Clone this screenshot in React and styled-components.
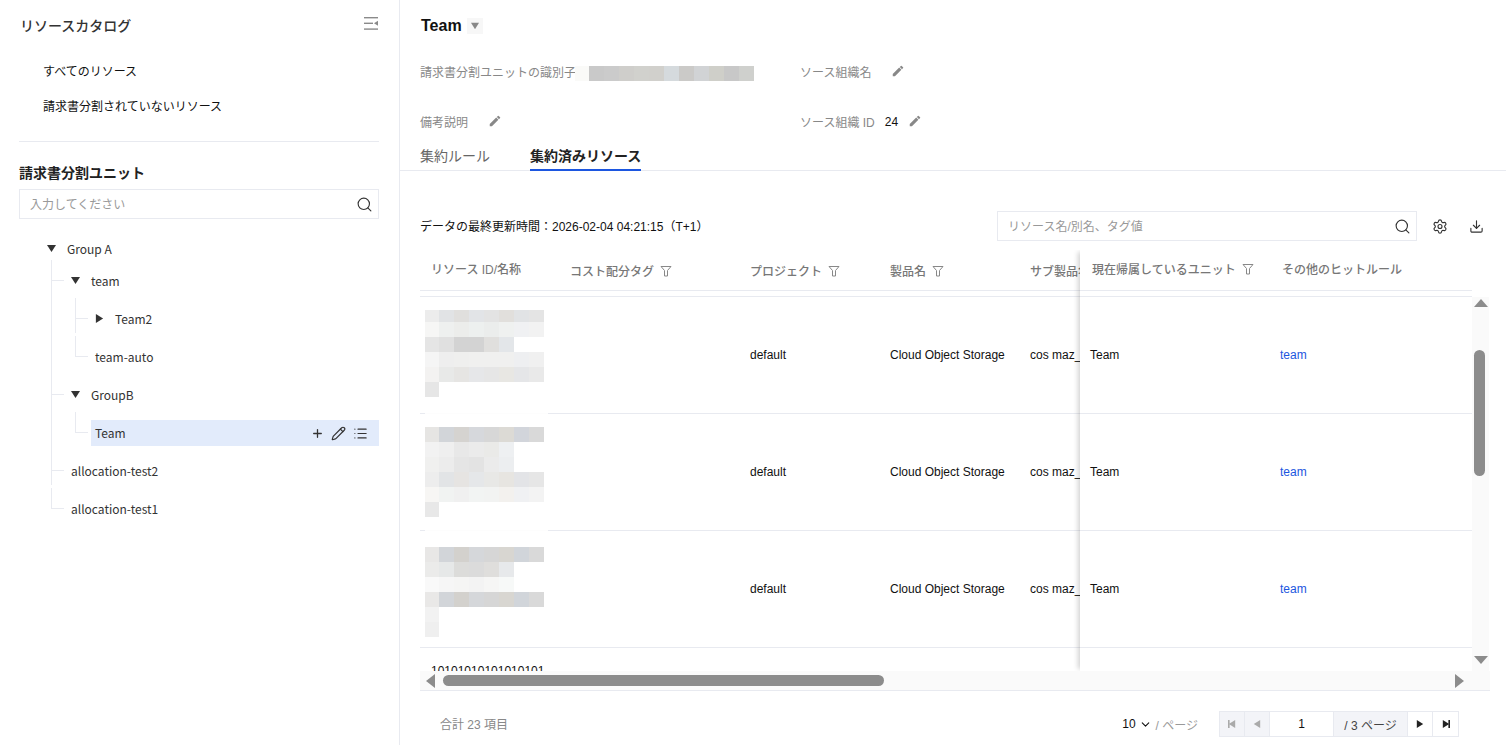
import React from "react";
import styled, { createGlobalStyle } from "styled-components";
import { Search, Plus, Pencil, List, Settings, Download, ChevronDown } from "lucide-react";
import { MdEdit } from "react-icons/md";

const LINE = "#e8eaf0";

const ID_MOSAIC = [
  ["#fafaf8", "#c9c9c9", "#cbcbcb", "#cfcecb", "#d1d1cd", "#d1d0cc", "#d5dadd", "#cbcac8", "#d1d3d5", "#cfcfc9", "#c8c8c8", "#cfd0cd"],
];

const MOSAICS = [
  [
    ["#ececec", "#e1e3e5", "#e0dfdd", "#e2e4e7", "#e3e3e3", "#e1dfdc", "#e1e3e5", "#e4e4e4"],
    ["#f6f6f5", "#eef0ef", "#ecedeb", "#edf0ef", "#ebedec", "#eff1f0", "#f0f1f3", "#f2f2f2"],
    ["#e5e5e5", "#e0e0e0", "#d3d3d3", "#d3d3d3", "#e0dfdd", "#e3e6e9"],
    ["#f5f5f5", "#eeeeee", "#efefee", "#f0f0ef", "#f0f0ef", "#f0f0ef", "#eeeff1", "#f0f0f0"],
    ["#f3f2f1", "#e8e9e8", "#e6e5e3", "#e6e7e9", "#e6e6e6", "#e8e7e3", "#e5e6e8", "#e9e9e9"],
    ["#e6e6e6"],
  ],
  [
    ["#e6e5e3", "#d2d5d9", "#d5d3d0", "#d6d8dc", "#d7d7d7", "#dcdad5", "#d2d5db", "#d9d9d9"],
    ["#f2f2f2", "#efefef", "#e8e8e8", "#ebebeb", "#eaeae8", "#eef0f2"],
    ["#f0f0ef", "#ececec", "#e5e5e5", "#e3e3e3", "#ebebeb", "#eceef0"],
    ["#ededed", "#e2e4e6", "#e6e4e2", "#e5e7e9", "#e8e8e6", "#e7e5e1", "#e3e4e7", "#e6e6e6"],
    ["#f7f6f4", "#f1f3f2", "#f0f0f0", "#f2f4f3", "#f2f3f2", "#f3f1ee", "#f0f1f3", "#f3f3f3"],
    ["#e8e8e8"],
  ],
  [
    ["#e8e7e6", "#d2d5d9", "#d3d1cd", "#d5d7da", "#d6d6d6", "#d8d6d1", "#d1d5da", "#d9d9d9"],
    ["#ebebea", "#e6e8e8", "#dcdcda", "#dbdbdb", "#dfdedc", "#e7e9eb"],
    ["#f9f9f9", "#f6f6f6", "#f5f5f4", "#f3f3f3", "#f6f6f5", "#f7f9f8"],
    ["#e9e8e7", "#d2d5d9", "#d3d1cd", "#d5d7da", "#d6d6d6", "#d8d6d1", "#d1d5da", "#d9d9d9"],
    ["#f2f2f2"],
    ["#efefef"],
  ],
];

const MOSAIC_TOPS = [13, 13, 16];

const Tri = ({ dir = "down", size = 8, bar }) => {
  const rot = { right: 0, down: 90, left: 180, up: 270 }[dir];
  return (
    <svg width={size} height={size} viewBox="0 0 10 10" style={{ transform: `rotate(${rot}deg)` }} fill="currentColor">
      <path d="M1 0 L9 5 L1 10 Z" />
      {bar && <rect x="8" y="0" width="2" height="10" />}
    </svg>
  );
};

// the flat triangles at the ends of the scroll bars
const BarTri = ({ dir }) => {
  const paths = {
    up: ["14", "8", "M0 8 L7 0 L14 8 Z"],
    down: ["14", "8", "M0 0 L14 0 L7 8 Z"],
    left: ["9", "14", "M9 0 V14 L0 7 Z"],
    right: ["9", "14", "M0 0 V14 L9 7 Z"],
  };
  const [w, h, d] = paths[dir];
  return (
    <svg width={w} height={h} viewBox={`0 0 ${w} ${h}`} fill="currentColor">
      <path d={d} />
    </svg>
  );
};

const Funnel = () => (
  <FunnelIcon width="12" height="12" viewBox="0 0 12 12" fill="none" stroke="currentColor" strokeWidth="1">
    <path d="M1 1.5 H11 L7.5 5.5 V11 H4.5 V5.5 Z" />
  </FunnelIcon>
);

const CollapseIcon = () => (
  <svg width="15" height="13" viewBox="0 0 15 13" fill="#8a8a8a">
    <rect x="0" y="0" width="14" height="1.4" />
    <rect x="0" y="5.6" width="9" height="1.4" />
    <path d="M10 6.3 L14 3.8 V8.8 Z" />
    <rect x="0" y="11.4" width="14" height="1.4" />
  </svg>
);

const Mosaic = ({ data, cell, first }) => (
  <MosaicGrid>
    {data.map((row, r) => (
      <MosaicRow key={r}>
        {row.map((c, i) => (
          <MosaicCell key={i} $c={c} $w={i === 0 ? cell - 1 : cell} $h={r === 0 && first ? first : 15} />
        ))}
      </MosaicRow>
    ))}
  </MosaicGrid>
);

const TableHead = () => (
  <HeadRow>
    <HeadCell $raised>リソース ID/名称</HeadCell>
    <HeadCell>
      コスト配分タグ <Funnel />
    </HeadCell>
    <HeadCell>
      プロジェクト <Funnel />
    </HeadCell>
    <HeadCell>
      製品名 <Funnel />
    </HeadCell>
    <HeadCell>サブ製品名</HeadCell>
  </HeadRow>
);

const App = () => {
  return (
    <>
      <GlobalStyle />
      <Page>
        <Sidebar>
          <SideTitleBar>
            <SideTitle>リソースカタログ</SideTitle>
            <CollapseIcon />
          </SideTitleBar>
          <CatalogList>
            <CatalogItem>すべてのリソース</CatalogItem>
            <CatalogItem>請求書分割されていないリソース</CatalogItem>
          </CatalogList>
          <Divider />
          <UnitTitle>請求書分割ユニット</UnitTitle>
          <InputBox>
            <Placeholder>入力してください</Placeholder>
            <Search size={17} strokeWidth={1.6} color="#333" />
          </InputBox>
          <Tree>
            <TreeRow>
              <Arrow><Tri dir="down" size={9} /></Arrow>
              <span>Group A</span>
            </TreeRow>
            <Branch $root>
              <Node>
                <TreeRow>
                  <Arrow><Tri dir="down" size={9} /></Arrow>
                  <span>team</span>
                </TreeRow>
                <Branch>
                  <Node>
                    <TreeRow>
                      <Arrow><Tri dir="right" size={9} /></Arrow>
                      <span>Team2</span>
                    </TreeRow>
                  </Node>
                  <Node>
                    <TreeRow $leaf>team-auto</TreeRow>
                  </Node>
                </Branch>
              </Node>
              <Node>
                <TreeRow>
                  <Arrow><Tri dir="down" size={9} /></Arrow>
                  <span>GroupB</span>
                </TreeRow>
                <Branch>
                  <Node>
                    <TreeRow $leaf $active>
                      <span>Team</span>
                      <RowActions>
                        <Plus size={13} strokeWidth={2.4} />
                        <Pencil size={15} strokeWidth={1.9} />
                        <List size={15} strokeWidth={1.8} />
                      </RowActions>
                    </TreeRow>
                  </Node>
                </Branch>
              </Node>
              <Node>
                <TreeRow $leaf>allocation-test2</TreeRow>
              </Node>
              <Node>
                <TreeRow $leaf>allocation-test1</TreeRow>
              </Node>
            </Branch>
          </Tree>
        </Sidebar>

        <Main>
          <TitleBar>
            <PageTitle>Team</PageTitle>
            <TitleCaret><Tri dir="down" size={8} /></TitleCaret>
          </TitleBar>

          <InfoGrid>
            <InfoItem>
              <InfoLabel>請求書分割ユニットの識別子</InfoLabel>
              <IdMosaicSlot><Mosaic data={ID_MOSAIC} cell={15} /></IdMosaicSlot>
            </InfoItem>
            <InfoItem>
              <InfoLabel>ソース組織名</InfoLabel>
              <EditIcon $gap={20}><MdEdit size={14} /></EditIcon>
            </InfoItem>
            <InfoItem>
              <InfoLabel>備考説明</InfoLabel>
              <EditIcon $gap={20}><MdEdit size={14} /></EditIcon>
            </InfoItem>
            <InfoItem>
              <InfoLabel>ソース組織 ID</InfoLabel>
              <InfoValue>24</InfoValue>
              <EditIcon $gap={10}><MdEdit size={14} /></EditIcon>
            </InfoItem>
          </InfoGrid>

          <Tabs>
            <Tab>集約ルール</Tab>
            <Tab $active>集約済みリソース</Tab>
          </Tabs>

          <Toolbar>
            <UpdatedAt>データの最終更新時間：2026-02-04 04:21:15（T+1）</UpdatedAt>
            <ToolRight>
              <SearchBox>
                <Placeholder>リソース名/別名、タグ値</Placeholder>
                <Search size={17} strokeWidth={1.6} color="#333" />
              </SearchBox>
              <ToolIcon><Settings size={17} strokeWidth={1.7} /></ToolIcon>
              <ToolIcon><Download size={15} strokeWidth={1.8} /></ToolIcon>
            </ToolRight>
          </Toolbar>

          <TableFrame>
            <TableBody>
              <ScrollCols>
                <TableHead />
                <HeadGap />
                {MOSAICS.map((m, i) => (
                  <BodyRow key={i}>
                    <MosaicSlot $seam={i < 2} $top={MOSAIC_TOPS[i]}>
                      <Mosaic data={m} cell={15} first={i === 0 ? 12 : undefined} />
                    </MosaicSlot>
                    <BodyCell />
                    <BodyCell>default</BodyCell>
                    <BodyCell>Cloud Object Storage</BodyCell>
                    <BodyCell>cos maz_standard</BodyCell>
                  </BodyRow>
                ))}
                <ClippedRow>10101010101010101</ClippedRow>
              </ScrollCols>
              <FixedCols>
                <FixedHead>
                  <FixedHeadCell>
                    現在帰属しているユニット <Funnel />
                  </FixedHeadCell>
                  <FixedHeadCell>その他のヒットルール</FixedHeadCell>
                </FixedHead>
                <HeadGap />
                {MOSAICS.map((_, i) => (
                  <FixedRow key={i}>
                    <BodyCell>Team</BodyCell>
                    <LinkCell>team</LinkCell>
                  </FixedRow>
                ))}
              </FixedCols>
              <VBar>
                <VArrow><BarTri dir="up" /></VArrow>
                <VThumb />
                <VArrow><BarTri dir="down" /></VArrow>
              </VBar>
            </TableBody>
            <HBar>
              <HArrow><BarTri dir="left" /></HArrow>
              <HThumb />
              <HArrow><BarTri dir="right" /></HArrow>
            </HBar>
          </TableFrame>

          <Footer>
            <Total>合計 23 項目</Total>
            <PageSize>
              <span>10</span>
              <ChevronDown size={13} strokeWidth={2} />
              <PageSizeUnit>/ ページ</PageSizeUnit>
            </PageSize>
            <Pager>
              <PagerBtn $off><Tri dir="left" size={8} bar /></PagerBtn>
              <PagerBtn $off><Tri dir="left" size={8} /></PagerBtn>
              <PagerInput>1</PagerInput>
              <PagerTotal>/ 3 ページ</PagerTotal>
              <PagerBtn><Tri dir="right" size={8} /></PagerBtn>
              <PagerBtn><Tri dir="right" size={8} bar /></PagerBtn>
            </Pager>
          </Footer>
        </Main>
      </Page>
    </>
  );
};

export default App;

const GlobalStyle = createGlobalStyle`
  html, body {
    margin: 0;
    padding: 0;
    background: #fff;
  }
  body {
    font-family: "Liberation Sans", "Noto Sans CJK JP", sans-serif;
    font-size: 12px;
    color: #111;
  }
  * {
    box-sizing: border-box;
  }
`;
const Page = styled.div`
  display: flex;
  width: 1506px;
  height: 745px;
  overflow: hidden;
`;
const Sidebar = styled.aside`
  width: 400px;
  flex-shrink: 0;
  border-right: 1px solid ${LINE};
  padding: 0 20px 0 19px;
`;
const SideTitleBar = styled.div`
  display: flex;
  align-items: center;
  justify-content: space-between;
  height: 50px;
  svg {
    margin-top: -3px;
  }
`;
const SideTitle = styled.h2`
  margin: -1px 0 0 1px;
  font-size: 14px;
  font-weight: 500;
  color: #333;
`;
const CatalogList = styled.div`
  padding-top: 2px;
`;
const CatalogItem = styled.div`
  height: 35px;
  margin-left: 24px;
  line-height: 41px;
  font-size: 12px;
  color: #111;
`;
const Divider = styled.div`
  height: 1px;
  margin-top: 19px;
  background: ${LINE};
`;
const UnitTitle = styled.h3`
  margin: 21px 0 6px;
  font-size: 14px;
  line-height: 20px;
  font-weight: 700;
  color: #222;
`;
const InputBox = styled.div`
  display: flex;
  align-items: center;
  justify-content: space-between;
  height: 30px;
  padding: 0 5px 0 10px;
  border: 1px solid ${LINE};
`;
const Placeholder = styled.span`
  margin-top: -2px;
  font-size: 12px;
  color: #999;
`;
const Tree = styled.div`
  margin-top: 17px;
  padding-left: 24px;
  font-family: "Noto Sans CJK JP", "Noto Sans", sans-serif;
  font-size: 12px;
  color: #333;
`;
const TreeRow = styled.div`
  display: flex;
  align-items: center;
  height: 26px;
  padding-left: ${(p) => (p.$leaf ? "4px" : "0")};
  padding-right: 11px;
  padding-bottom: 2px;
  background: ${(p) => (p.$active ? "#e2ebfb" : "transparent")};
`;
const Arrow = styled.span`
  display: flex;
  align-items: center;
  justify-content: center;
  width: 16px;
  margin-right: 8px;
  color: #333;
`;
const Branch = styled.ul`
  list-style: none;
  margin: 0;
  padding: 0 0 0 24px;
  ${(p) =>
    p.$root &&
    `
    > li:first-child { padding-top: 6px; }
    > li:first-child::before { top: -2px; height: 20px; }
    > li:first-child::after { top: -2px; }
  `}
`;
const Node = styled.li`
  position: relative;
  padding-top: 12px;
  &::before {
    content: "";
    position: absolute;
    left: -16px;
    top: 4px;
    width: 12px;
    height: 20px;
    border-left: 1px solid ${LINE};
    border-bottom: 1px solid ${LINE};
  }
  &:not(:last-child)::after {
    content: "";
    position: absolute;
    left: -16px;
    top: 0;
    bottom: -1px;
    border-left: 1px solid ${LINE};
  }
  &:first-child::after {
    top: 4px;
  }
`;
const RowActions = styled.div`
  display: flex;
  align-items: center;
  gap: 7px;
  margin-left: auto;
  margin-bottom: -2px;
  color: #333;
`;
const Main = styled.main`
  flex: 1;
  min-width: 0;
  display: flex;
  flex-direction: column;
`;
const TitleBar = styled.div`
  display: flex;
  align-items: center;
  gap: 5px;
  height: 50px;
  padding: 2px 0 0 21px;
`;
const PageTitle = styled.h1`
  margin: 0;
  font-size: 16px;
  font-weight: 700;
  color: #111;
`;
const TitleCaret = styled.span`
  display: flex;
  align-items: center;
  justify-content: center;
  width: 16px;
  height: 16px;
  background: #f7f7f7;
  color: #888;
`;
const InfoGrid = styled.div`
  display: grid;
  grid-template-columns: 380px 1fr;
  grid-auto-rows: 50px;
  height: 97px;
  margin-top: -4px;
  padding-left: 20px;
`;
const InfoItem = styled.div`
  display: flex;
  align-items: center;
  height: 50px;
`;
const InfoLabel = styled.span`
  font-size: 12px;
  color: #888;
`;
const InfoValue = styled.span`
  margin: 2px 0 0 10px;
  font-size: 12px;
  color: #111;
`;
const EditIcon = styled.span`
  display: flex;
  margin-left: ${(p) => p.$gap}px;
  color: #888;
`;
const IdMosaicSlot = styled.div`
  margin: 5px 0 0 -1px;
`;
const Tabs = styled.div`
  display: flex;
  gap: 40px;
  height: 28px;
  padding-left: 20px;
  border-bottom: 1px solid ${LINE};
`;
const Tab = styled.div`
  height: 28px;
  line-height: 26px;
  font-size: 14px;
  font-weight: ${(p) => (p.$active ? 700 : 400)};
  color: ${(p) => (p.$active ? "#222" : "#666")};
  border-bottom: 2px solid ${(p) => (p.$active ? "#1c56e0" : "transparent")};
`;
const Toolbar = styled.div`
  display: flex;
  align-items: center;
  justify-content: space-between;
  height: 30px;
  margin-top: 40px;
  padding: 0 22px 0 20px;
`;
const UpdatedAt = styled.span`
  margin-top: -2px;
  font-size: 12px;
  color: #111;
`;
const ToolRight = styled.div`
  display: flex;
  align-items: center;
`;
const SearchBox = styled(InputBox)`
  width: 420px;
  margin-right: 15px;
`;
const ToolIcon = styled.span`
  display: flex;
  justify-content: center;
  width: 16px;
  margin-left: 20px;
  color: #333;
  &:first-of-type {
    margin-left: 0;
  }
`;
const TableFrame = styled.div`
  width: 1070px;
  margin: 9px 0 0 20px;
`;
const TableBody = styled.div`
  display: flex;
  height: 421px;
  overflow: hidden;
`;
const ScrollCols = styled.div`
  width: 660px;
  flex-shrink: 0;
  overflow: hidden;
`;
const COLS = "140px 180px 140px 140px 140px";
const HeadRow = styled.div`
  display: grid;
  grid-template-columns: ${COLS};
  width: 740px;
  height: 41px;
  border-bottom: 1px solid ${LINE};
`;
const HeadCell = styled.div`
  display: flex;
  align-items: center;
  gap: 6px;
  padding: ${(p) => (p.$raised ? "0 0 3px 11px" : "1px 0 0 10px")};
  font-size: 12px;
  font-weight: 500;
  color: #777;
  white-space: nowrap;
  overflow: hidden;
`;
const FunnelIcon = styled.svg`
  flex-shrink: 0;
  color: #888;
`;
const HeadGap = styled.div`
  height: 6px;
  border-bottom: 1px solid ${LINE};
`;
const BodyRow = styled.div`
  display: grid;
  grid-template-columns: ${COLS};
  width: 740px;
  height: 117px;
  border-bottom: 1px solid ${LINE};
`;
const BodyCell = styled.div`
  display: flex;
  align-items: center;
  padding-left: 10px;
  font-size: 12px;
  color: #111;
  white-space: nowrap;
  overflow: hidden;
`;
const MosaicSlot = styled.div`
  position: relative;
  padding: ${(p) => p.$top}px 0 0 5px;
  &::after {
    content: "";
    display: ${(p) => (p.$seam ? "block" : "none")};
    position: absolute;
    left: 5px;
    bottom: -1px;
    width: 123px;
    height: 1px;
    background: #fdfdfd;
  }
`;
const MosaicGrid = styled.div`
  display: flex;
  flex-direction: column;
`;
const MosaicRow = styled.div`
  display: flex;
`;
const MosaicCell = styled.div`
  width: ${(p) => p.$w}px;
  height: ${(p) => p.$h}px;
  background: ${(p) => p.$c};
`;
const ClippedRow = styled.div`
  padding: 16px 0 0 11px;
  line-height: 14px;
  font-size: 12px;
  color: #111;
`;
const FixedCols = styled.div`
  width: 392px;
  flex-shrink: 0;
  background: #fff;
  box-shadow: -4px 0 5px -2px rgba(0, 0, 0, 0.18);
  position: relative;
`;
const FixedHead = styled.div`
  display: grid;
  grid-template-columns: 190px 202px;
  height: 41px;
  border-bottom: 1px solid ${LINE};
`;
const FixedHeadCell = styled(HeadCell)`
  padding: 0 0 3px 12px;
`;
const FixedRow = styled.div`
  display: grid;
  grid-template-columns: 190px 202px;
  height: 117px;
  border-bottom: 1px solid ${LINE};
`;
const LinkCell = styled(BodyCell)`
  color: #1c56e0;
`;
const VBar = styled.div`
  display: flex;
  flex-direction: column;
  align-items: center;
  justify-content: space-between;
  width: 17px;
  margin-top: 47px;
  padding-bottom: 5px;
  background: #fafafa;
  position: relative;
`;
const VArrow = styled.span`
  display: flex;
  align-items: center;
  justify-content: center;
  height: 12px;
  color: #8c8c8c;
`;
const HArrow = styled.span`
  display: flex;
  align-items: center;
  color: #8c8c8c;
`;
const VThumb = styled.div`
  position: absolute;
  top: 53px;
  left: 2px;
  width: 11px;
  height: 126px;
  border-radius: 6px;
  background: #8c8c8c;
`;
const HBar = styled.div`
  display: flex;
  align-items: center;
  justify-content: space-between;
  height: 20px;
  padding: 0 26px 0 6px;
  background: #fafafa;
  border-bottom: 1px solid ${LINE};
  position: relative;
`;
const HThumb = styled.div`
  position: absolute;
  top: 4px;
  left: 23px;
  width: 441px;
  height: 11px;
  border-radius: 6px;
  background: #8c8c8c;
`;
const Footer = styled.div`
  display: flex;
  align-items: center;
  width: 1019px;
  height: 26px;
  margin: 20px 0 0 40px;
`;
const Total = styled.span`
  margin-top: -2px;
  font-size: 12px;
  color: #888;
`;
const PageSize = styled.div`
  display: flex;
  align-items: center;
  gap: 3px;
  margin-left: auto;
  margin-right: 21px;
  color: #111;
`;
const PageSizeUnit = styled.span`
  margin-left: 1px;
  color: #999;
`;
const Pager = styled.div`
  display: flex;
  height: 26px;
  border: 1px solid ${LINE};
`;
const PagerBtn = styled.span`
  display: flex;
  align-items: center;
  justify-content: center;
  width: 25px;
  border-right: 1px solid ${LINE};
  background: ${(p) => (p.$off ? "#f3f4f8" : "#fff")};
  color: ${(p) => (p.$off ? "#aaa" : "#222")};
  &:last-child {
    border-right: 0;
  }
`;
const PagerInput = styled.span`
  display: flex;
  align-items: center;
  justify-content: center;
  width: 64px;
  border-right: 1px solid ${LINE};
  color: #111;
`;
const PagerTotal = styled.span`
  display: flex;
  align-items: center;
  justify-content: center;
  width: 74px;
  border-right: 1px solid ${LINE};
  background: #f3f4f8;
  color: #444;
`;
